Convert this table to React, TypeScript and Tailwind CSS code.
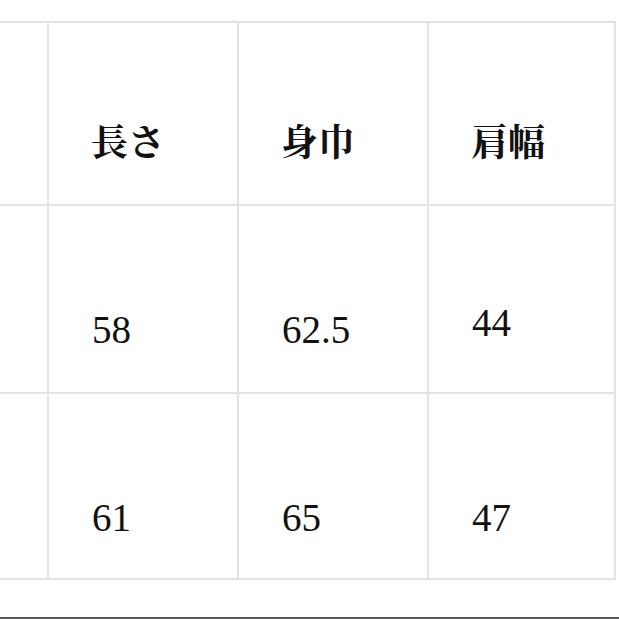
import { Fragment } from 'react';

const headers = ['長さ', '身巾', '肩幅'];

const rows = [
  { cells: ['58', '62.5', '44'], pads: ['pt-[104px]', 'pt-[104px]', 'pt-[97px]'] },
  { cells: ['61', '65', '47'], pads: ['pt-[104px]', 'pt-[104px]', 'pt-[104px]'] },
];

export default function App() {
  return (
    <div className="w-[619px] h-[619px] bg-white overflow-hidden flex flex-col">
      <div className="mt-[21px] w-[616px] grid grid-cols-[47px_188px_188px_185px] grid-rows-[181px_186px_184px] gap-[2px] py-[2px] pr-[2px] bg-[#e3e3e3]">
        <div className="bg-white" />
        {headers.map((h) => (
          <div key={h} className="bg-white pl-[42px] pt-[99px]">
            <span
              className="block text-[37px] leading-[37px] font-bold text-[#111]"
              style={{ fontFamily: '"Noto Serif CJK JP", "Noto Sans CJK JP", serif' }}
            >
              {h}
            </span>
          </div>
        ))}
        {rows.map((r, i) => (
          <Fragment key={i}>
            <div className="bg-white" />
            {r.cells.map((c, j) => (
              <div key={j} className={`bg-white pl-[43px] ${r.pads[j]}`}>
                <span className="block text-[39px] leading-[39px] text-[#111] font-['Liberation_Serif',serif]">
                  {c}
                </span>
              </div>
            ))}
          </Fragment>
        ))}
      </div>
      <div className="flex-1" />
      <div className="h-[2px] bg-[#5a5a5a]" />
    </div>
  );
}
